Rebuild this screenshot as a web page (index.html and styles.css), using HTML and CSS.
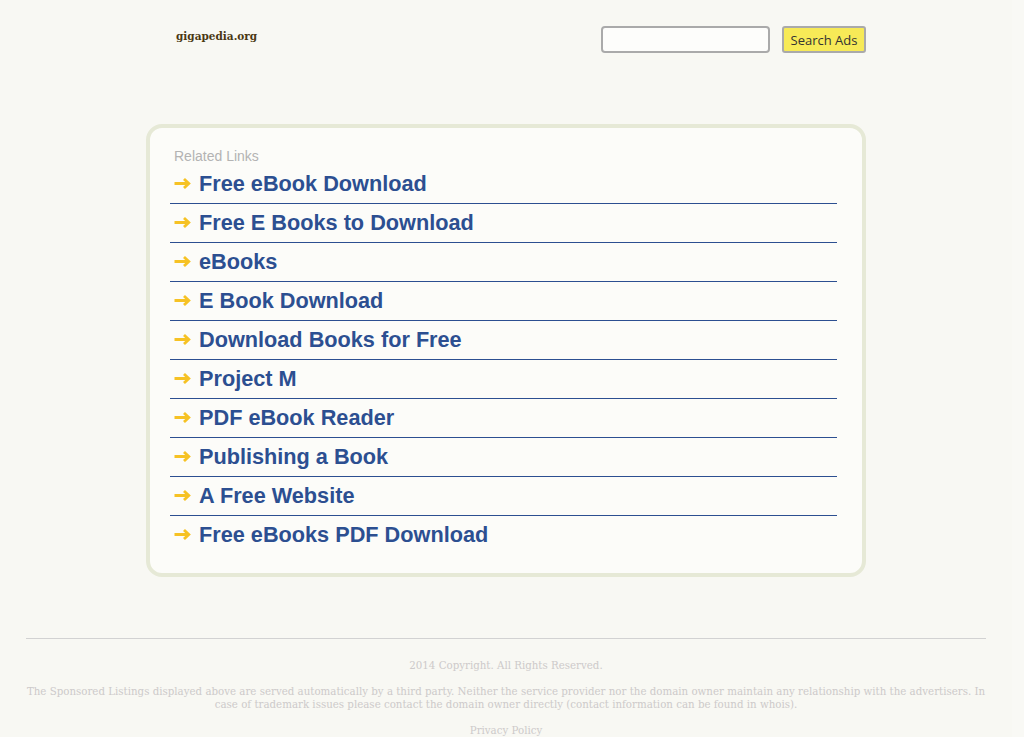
FILE: index.html
```html
<!DOCTYPE html>
<html>
<head>
<meta charset="utf-8">
<link rel="stylesheet" href="styles.css">
</head>
<body>
<div class="page">
  <header class="header">
    <div class="logo">gigapedia.org</div>
    <form class="search">
      <input class="search-input" type="text">
      <button class="search-btn" type="button">Search Ads</button>
    </form>
  </header>

  <main class="card">
    <div class="card-title">Related Links</div>
    <ul class="links">
      <li><a href="#"><svg class="arrow" viewBox="0 0 17 11"><path d="M0.5 5.5H15M10 1L14.8 5.5L10 10" /></svg>Free eBook Download</a></li>
      <li><a href="#"><svg class="arrow" viewBox="0 0 17 11"><path d="M0.5 5.5H15M10 1L14.8 5.5L10 10" /></svg>Free E Books to Download</a></li>
      <li><a href="#"><svg class="arrow" viewBox="0 0 17 11"><path d="M0.5 5.5H15M10 1L14.8 5.5L10 10" /></svg>eBooks</a></li>
      <li><a href="#"><svg class="arrow" viewBox="0 0 17 11"><path d="M0.5 5.5H15M10 1L14.8 5.5L10 10" /></svg>E Book Download</a></li>
      <li><a href="#"><svg class="arrow" viewBox="0 0 17 11"><path d="M0.5 5.5H15M10 1L14.8 5.5L10 10" /></svg>Download Books for Free</a></li>
      <li><a href="#"><svg class="arrow" viewBox="0 0 17 11"><path d="M0.5 5.5H15M10 1L14.8 5.5L10 10" /></svg>Project M</a></li>
      <li><a href="#"><svg class="arrow" viewBox="0 0 17 11"><path d="M0.5 5.5H15M10 1L14.8 5.5L10 10" /></svg>PDF eBook Reader</a></li>
      <li><a href="#"><svg class="arrow" viewBox="0 0 17 11"><path d="M0.5 5.5H15M10 1L14.8 5.5L10 10" /></svg>Publishing a Book</a></li>
      <li><a href="#"><svg class="arrow" viewBox="0 0 17 11"><path d="M0.5 5.5H15M10 1L14.8 5.5L10 10" /></svg>A Free Website</a></li>
      <li><a href="#"><svg class="arrow" viewBox="0 0 17 11"><path d="M0.5 5.5H15M10 1L14.8 5.5L10 10" /></svg>Free eBooks PDF Download</a></li>
    </ul>
  </main>

  <footer class="footer">
    <p>2014 Copyright. All Rights Reserved.</p>
    <p>The Sponsored Listings displayed above are served automatically by a third party. Neither the service provider nor the domain owner maintain any relationship with the advertisers. In case of trademark issues please contact the domain owner directly (contact information can be found in whois).</p>
    <p><a href="#">Privacy Policy</a></p>
  </footer>
</div>
</body>
</html>
```

FILE: styles.css
```css
html {
  background: #f9f9f5;
}
body {
  margin: 0;
  background: #f8f8f3;
  width: 1012px;
  min-height: 737px;
}
.page {
  width: 1012px;
}
.header {
  width: 720px;
  margin: 0 auto;
  padding-top: 26px;
  display: flex;
  justify-content: space-between;
  align-items: flex-start;
  box-sizing: border-box;
}
.logo {
  margin-left: 30px;
  margin-top: 4px;
  font-family: "DejaVu Serif", serif;
  font-weight: bold;
  font-size: 10.5px;
  color: #4a3712;
}
.search {
  display: flex;
  gap: 12px;
  margin: 0;
}
.search-input {
  width: 169px;
  height: 27px;
  box-sizing: border-box;
  border: 2px solid #aaaaaa;
  border-radius: 4px;
  background: #fdfdfb;
  margin: 0;
  padding: 0 4px;
}
.search-btn {
  width: 84px;
  height: 27px;
  box-sizing: border-box;
  border: 2px solid #aaaaaa;
  border-radius: 3px;
  background: #f7ea57;
  color: #333333;
  font-family: "Open Sans", "DejaVu Sans", sans-serif;
  font-size: 13px;
  padding: 0;
  margin: 0;
}
.card {
  display: block;
  width: 720px;
  box-sizing: border-box;
  margin: 71px auto 0;
  border: 4px solid #e6e9d6;
  border-radius: 16px;
  background: #fcfcf9;
  padding: 20px 25px 19px 20px;
}
.card-title {
  font-family: "Liberation Sans", Arial, sans-serif;
  font-size: 14px;
  line-height: 16px;
  color: #b3b3b3;
  padding-left: 4px;
  margin-bottom: 1px;
}
.links {
  list-style: none;
  margin: 0;
  padding: 0;
}
.links li {
  border-bottom: 1px solid #2c4f91;
  padding: 6px 0 7px 4px;
}
.links li:last-child {
  border-bottom: none;
}
.links a {
  display: flex;
  align-items: center;
  font-family: "Liberation Sans", Arial, sans-serif;
  font-weight: bold;
  font-size: 21.7px;
  line-height: 25px;
  color: #2c4f91;
  text-decoration: none;
}
.arrow {
  width: 17px;
  height: 11px;
  margin-right: 8px;
  fill: none;
  stroke: #f6c224;
  stroke-width: 2.8;
}
.footer {
  width: 960px;
  margin: 61px auto 0;
  border-top: 1px solid #d2d2d2;
  padding-top: 20px;
  text-align: center;
  font-family: "DejaVu Serif", serif;
  font-size: 10.25px;
  line-height: 13px;
  color: #cdcaca;
}
.footer p {
  margin: 0 0 13px;
}
.footer a {
  color: #cdcaca;
  text-decoration: none;
}
```
